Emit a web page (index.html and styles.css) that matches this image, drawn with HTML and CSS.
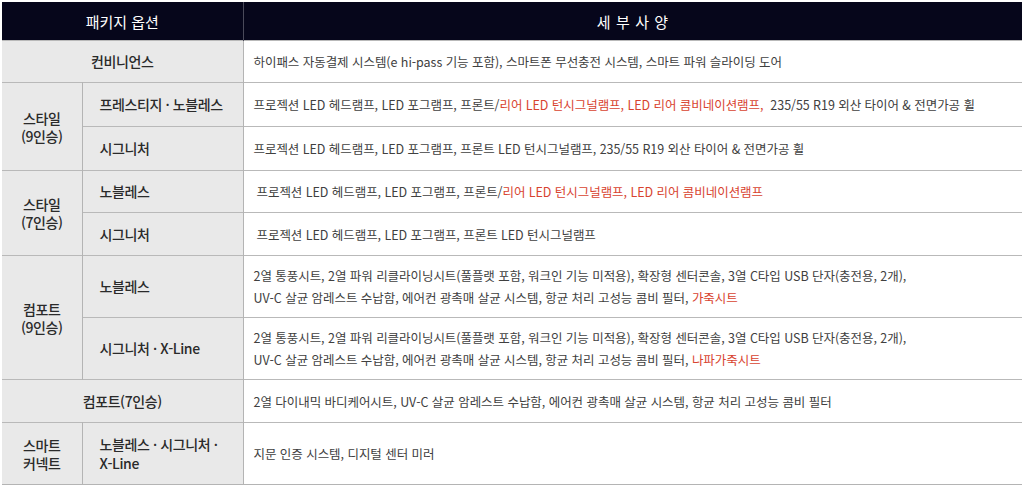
FILE: index.html
```html
<!DOCTYPE html>
<html lang="ko">
<head>
<meta charset="utf-8">
<title>패키지 옵션</title>
<link rel="stylesheet" href="styles.css">
</head>
<body>
<div class="wrap">
<table class="spec">
  <colgroup>
    <col class="c-group">
    <col class="c-sub">
    <col class="c-detail">
  </colgroup>
  <thead>
    <tr class="r-head">
      <th colspan="2">패키지 옵션</th>
      <th class="h-detail">세 부 사 양</th>
    </tr>
  </thead>
  <tbody>
    <tr class="r-42">
      <th colspan="2" class="lbl center">컨비니언스</th>
      <td>하이패스 자동결제 시스템(e hi-pass 기능 포함), 스마트폰 무선충전 시스템, 스마트 파워 슬라이딩 도어</td>
    </tr>
    <tr class="r-44">
      <th rowspan="2" class="grp">스타일<br>(9인승)</th>
      <th class="lbl">프레스티지 · 노블레스</th>
      <td>프로젝션 LED 헤드램프, LED 포그램프, 프론트/<span class="red">리어 LED 턴시그널램프, LED 리어 콤비네이션램프,</span>&nbsp; 235/55 R19 외산 타이어 &amp; 전면가공 휠</td>
    </tr>
    <tr class="r-44">
      <th class="lbl">시그니처</th>
      <td>프로젝션 LED 헤드램프, LED 포그램프, 프론트 LED 턴시그널램프, 235/55 R19 외산 타이어 &amp; 전면가공 휠</td>
    </tr>
    <tr class="r-42">
      <th rowspan="2" class="grp">스타일<br>(7인승)</th>
      <th class="lbl">노블레스</th>
      <td class="indent">프로젝션 LED 헤드램프, LED 포그램프, 프론트/<span class="red">리어 LED 턴시그널램프, LED 리어 콤비네이션램프</span></td>
    </tr>
    <tr class="r-43">
      <th class="lbl">시그니처</th>
      <td class="indent">프로젝션 LED 헤드램프, LED 포그램프, 프론트 LED 턴시그널램프</td>
    </tr>
    <tr class="r-62">
      <th rowspan="2" class="grp">컴포트<br>(9인승)</th>
      <th class="lbl">노블레스</th>
      <td class="two">2열 통풍시트, 2열 파워 리클라이닝시트(풀플랫 포함, 워크인 기능 미적용), 확장형 센터콘솔, 3열 C타입 USB 단자(충전용, 2개),<br>UV-C 살균 암레스트 수납함, 에어컨 광촉매 살균 시스템, 항균 처리 고성능 콤비 필터, <span class="red">가죽시트</span></td>
    </tr>
    <tr class="r-62">
      <th class="lbl">시그니처 · X-Line</th>
      <td class="two">2열 통풍시트, 2열 파워 리클라이닝시트(풀플랫 포함, 워크인 기능 미적용), 확장형 센터콘솔, 3열 C타입 USB 단자(충전용, 2개),<br>UV-C 살균 암레스트 수납함, 에어컨 광촉매 살균 시스템, 항균 처리 고성능 콤비 필터, <span class="red">나파가죽시트</span></td>
    </tr>
    <tr class="r-43">
      <th colspan="2" class="lbl center">컴포트(7인승)</th>
      <td>2열 다이내믹 바디케어시트, UV-C 살균 암레스트 수납함, 에어컨 광촉매 살균 시스템, 항균 처리 고성능 콤비 필터</td>
    </tr>
    <tr class="r-62 last">
      <th class="grp">스마트<br>커넥트</th>
      <th class="lbl">노블레스 · 시그니처 ·<br>X-Line</th>
      <td>지문 인증 시스템, 디지털 센터 미러</td>
    </tr>
  </tbody>
</table>
</div>
</body>
</html>
```

FILE: styles.css
```css
html, body {
  margin: 0;
  padding: 0;
  background: #ffffff;
}

.wrap {
  padding: 2px 2px 0 2px;
}

.spec {
  width: 1020px;
  border-collapse: collapse;
  table-layout: fixed;
  font-family: "Noto Sans CJK KR", "Noto Sans", sans-serif;
  color: #404040;
}

.c-group { width: 80px; }
.c-sub { width: 161px; }
.c-detail { width: auto; }

.r-head th {
  background: #06061b;
  color: #ffffff;
  font-weight: 400;
  font-size: 15px;
  letter-spacing: 0;
  height: 38px;
  padding: 0;
  text-align: center;
  border-right: 1px solid #4a4a5a;
}

.r-head th.h-detail {
  border-right: none;
  letter-spacing: 0.6px;
}

tbody th,
tbody td {
  border-top: 1px solid #b9b9b9;
  padding: 0;
  vertical-align: middle;
}

tbody th {
  background: #e9e9e9;
  border-right: 1px solid #b4b4b4;
  font-weight: 500;
  font-size: 14px;
  color: #2a2a2a;
  letter-spacing: -0.4px;
  text-align: left;
}

tbody th.lbl {
  padding-left: 17px;
  line-height: 19px;
}

tbody th.center {
  padding-left: 0;
  text-align: center;
}

tbody th.grp {
  text-align: center;
  line-height: 18px;
}

tbody td {
  background: #ffffff;
  font-size: 12.5px;
  letter-spacing: -0.05px;
  padding-left: 10px;
  white-space: nowrap;
  overflow: hidden;
}

tbody td.indent {
  padding-left: 13px;
}

tbody td.two {
  line-height: 22px;
}

.r-42 { height: 42px; }
.r-43 { height: 43px; }
.r-44 { height: 44px; }
.r-62 { height: 62px; }

tr.last th,
tr.last td {
  border-bottom: 1px solid #b4b4b4;
}

.red {
  color: #d8432f;
}
```
